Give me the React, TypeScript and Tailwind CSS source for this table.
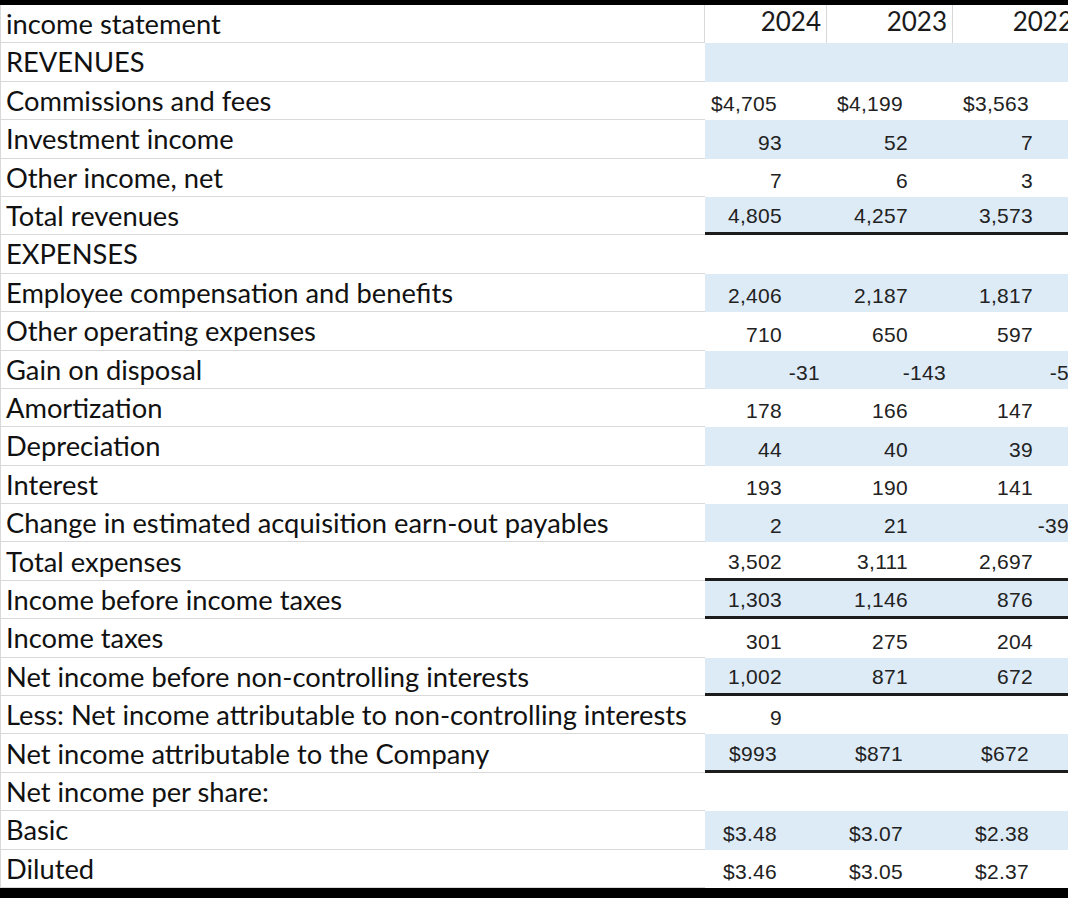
import React from "react";

type Kind = "n" | "d" | "neg";
type Row = {
  label: string;
  vals?: string[];
  kinds?: Kind[];
  header?: boolean;
  border?: boolean;
};

const rows: Row[] = [
  { label: "income statement", header: true, vals: ["2024", "2023", "2022"] },
  { label: "REVENUES" },
  { label: "Commissions and fees", vals: ["$4,705", "$4,199", "$3,563"], kinds: ["d", "d", "d"] },
  { label: "Investment income", vals: ["93", "52", "7"] },
  { label: "Other income, net", vals: ["7", "6", "3"] },
  { label: "Total revenues", vals: ["4,805", "4,257", "3,573"], border: true },
  { label: "EXPENSES" },
  { label: "Employee compensation and benefits", vals: ["2,406", "2,187", "1,817"] },
  { label: "Other operating expenses", vals: ["710", "650", "597"] },
  { label: "Gain on disposal", vals: ["-31", "-143", "-5"], kinds: ["neg", "neg", "neg"] },
  { label: "Amortization", vals: ["178", "166", "147"] },
  { label: "Depreciation", vals: ["44", "40", "39"] },
  { label: "Interest", vals: ["193", "190", "141"] },
  { label: "Change in estimated acquisition earn-out payables", vals: ["2", "21", "-39"], kinds: ["n", "n", "neg"] },
  { label: "Total expenses", vals: ["3,502", "3,111", "2,697"], border: true },
  { label: "Income before income taxes", vals: ["1,303", "1,146", "876"], border: true },
  { label: "Income taxes", vals: ["301", "275", "204"] },
  { label: "Net income before non-controlling interests", vals: ["1,002", "871", "672"], border: true },
  { label: "Less: Net income attributable to non-controlling interests", vals: ["9", "", ""] },
  { label: "Net income attributable to the Company", vals: ["$993", "$871", "$672"], kinds: ["d", "d", "d"], border: true },
  { label: "Net income per share:" },
  { label: "Basic", vals: ["$3.48", "$3.07", "$2.38"], kinds: ["d", "d", "d"] },
  { label: "Diluted", vals: ["$3.46", "$3.05", "$2.37"], kinds: ["d", "d", "d"] },
];

const widths = ["w-[122px]", "w-[126px]", "w-[126px]"];

function padFor(col: number, kind: Kind): string {
  if (kind === "d") return "pr-[50px]";
  if (kind === "neg") {
    if (col === 2) return "pr-[10px]";
    return "pr-[7px]";
  }
  if (col === 2) return "pr-[46px]";
  return "pr-[45px]";
}

function DataCell({ row, col, blue }: { row: Row; col: number; blue: boolean }) {
  const v = row.vals ? row.vals[col] : "";
  const kind: Kind = row.kinds ? row.kinds[col] : "n";
  if (row.header) {
    return (
      <div
        className={`${widths[col]} shrink-0 h-full bg-white border-r border-[#d6d6d6] flex items-end justify-end pr-[5px] pb-[9px] text-[26px] leading-none text-[#1a1a1a]`}
        style={{ fontFamily: "Lato, 'Noto Sans', sans-serif" }}
      >
        {v}
      </div>
    );
  }
  return (
    <div
      className={`${widths[col]} shrink-0 h-full flex items-end justify-end ${padFor(col, kind)} pb-[6px] text-[21px] tracking-[0.3px] leading-none text-[#222] ${
        blue ? "bg-[#ddebf7]" : "bg-white"
      } ${row.border ? "border-b-[3px] border-[#1c1c1c]" : ""}`}
      style={{ fontFamily: "'Liberation Sans', Arial, sans-serif" }}
    >
      {v}
    </div>
  );
}

export default function App() {
  return (
    <div className="w-[1068px] h-[898px] bg-black overflow-hidden pt-[5px]">
      <div className="flex flex-col bg-white w-[1079px]">
        {rows.map((row, i) => {
          const blue = i % 2 === 1;
          return (
            <div key={i} className="flex h-[38.4px]">
              <div
                className={`w-[705px] shrink-0 h-full border-l border-b border-[#d9d9d9] ${
                  row.header ? "border-r" : ""
                } flex items-end pl-[5px] pb-[5px] text-[27.3px] leading-none text-[#111]`}
                style={{ fontFamily: "Lato, 'Noto Sans', sans-serif" }}
              >
                {row.label}
              </div>
              {[0, 1, 2].map((c) => (
                <DataCell key={c} row={row} col={c} blue={blue} />
              ))}
            </div>
          );
        })}
      </div>
    </div>
  );
}
